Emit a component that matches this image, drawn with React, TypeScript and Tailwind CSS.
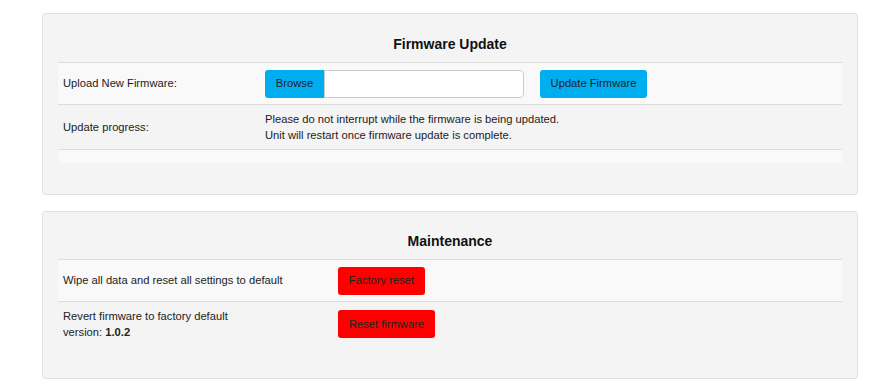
import React from "react";

const font = { fontFamily: '"Liberation Sans", Arial, sans-serif' };

export default function App() {
  return (
    <div className="min-h-[390px] w-[872px] bg-white pt-[13px] text-[11.2px] text-[#222]" style={font}>
      {/* Firmware Update panel */}
      <div className="ml-[42px] w-[816px] rounded-[3px] border border-[#e1e1e1] bg-[#f4f4f4] px-[15px] pb-[31px]">
        <div className="pt-[22px] pb-[10px] text-center text-[14px] font-bold leading-[16px] text-[#111]">
          Firmware Update
        </div>
        <div className="border-t border-[#dddddd]">
          <div className="flex h-[42px] items-center border-b border-[#dddddd] bg-[#f9f9f9]">
            <div className="w-[207px] pl-[5px]">Upload New Firmware:</div>
            <div className="flex items-center">
              <button className="h-[28px] w-[59px] rounded-l-[3px] bg-[#00aeef] text-[11.2px] text-[#222]">
                Browse
              </button>
              <div className="h-[28px] w-[200px] rounded-r-[4px] border border-[#cccccc] bg-white" />
              <button className="ml-[16px] h-[28px] w-[107px] rounded-[3px] bg-[#00aeef] text-[11.2px] text-[#222]">
                Update Firmware
              </button>
            </div>
          </div>
          <div className="flex h-[45px] items-center border-b border-[#dddddd]">
            <div className="w-[207px] pl-[5px]">Update progress:</div>
            <div className="leading-[16px]">
              <div>Please do not interrupt while the firmware is being updated.</div>
              <div>Unit will restart once firmware update is complete.</div>
            </div>
          </div>
          <div className="h-[13px] bg-[#f9f9f9]" />
        </div>
      </div>

      {/* Maintenance panel */}
      <div className="ml-[42px] mt-[16px] w-[816px] rounded-[3px] border border-[#e1e1e1] bg-[#f4f4f4] px-[15px] pb-[32px]">
        <div className="pt-[21px] pb-[10px] text-center text-[14px] font-bold leading-[16px] text-[#111]">
          Maintenance
        </div>
        <div className="border-t border-[#dddddd]">
          <div className="flex h-[42px] items-center border-b border-[#dddddd] bg-[#f9f9f9]">
            <div className="w-[280px] pl-[5px]">Wipe all data and reset all settings to default</div>
            <button className="h-[28px] w-[87px] rounded-[3px] bg-[#ff0000] text-[11.2px] text-[#222]">
              Factory reset
            </button>
          </div>
          <div className="flex h-[44px] items-center">
            <div className="w-[280px] pl-[5px] leading-[16px]">
              <div>Revert firmware to factory default</div>
              <div>
                version: <span className="font-bold">1.0.2</span>
              </div>
            </div>
            <button className="h-[28px] w-[97px] rounded-[3px] bg-[#ff0000] text-[11.2px] text-[#222]">
              Reset firmware
            </button>
          </div>
        </div>
      </div>
    </div>
  );
}
